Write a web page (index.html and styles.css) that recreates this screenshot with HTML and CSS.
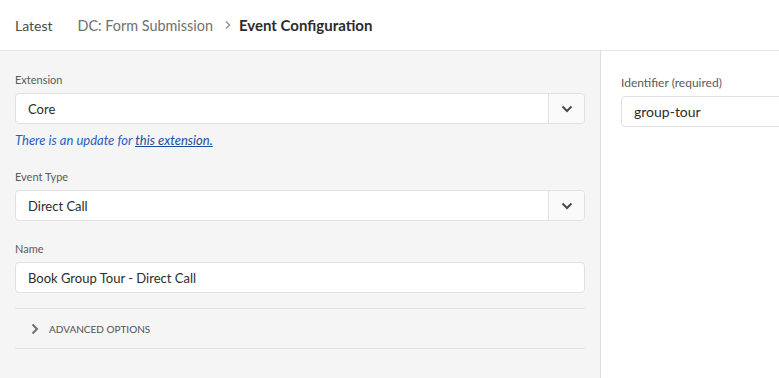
FILE: index.html
```html
<!DOCTYPE html>
<html lang="en">
<head>
    <meta charset="UTF-8">
    <meta name="viewport" content="width=device-width, initial-scale=1.0">
    <title>Event Configuration</title>
    <link rel="stylesheet" href="styles.css">
</head>
<body>
    <div class="header">
        <span class="latest">Latest</span>
        <span class="crumb">DC: Form Submission</span>
        <svg class="crumb-sep" width="8" height="10" viewBox="0 0 8 10"><path d="M2 1.5 L5.5 5 L2 8.5" fill="none" stroke="#8e8e8e" stroke-width="1.3"/></svg>
        <span class="current">Event Configuration</span>
    </div>
    <div class="main">
        <div class="left">
            <div class="field ext">
                <label>Extension</label>
                <div class="select">
                    <div class="select-value">Core</div>
                    <div class="select-btn">
                        <svg width="12" height="8" viewBox="0 0 12 8"><path d="M1.5 1.5 L6 6 L10.5 1.5" fill="none" stroke="#4b4b4b" stroke-width="2"/></svg>
                    </div>
                </div>
                <p class="update">There is an update for <a href="#">this extension.</a></p>
            </div>
            <div class="field">
                <label>Event Type</label>
                <div class="select">
                    <div class="select-value">Direct Call</div>
                    <div class="select-btn">
                        <svg width="12" height="8" viewBox="0 0 12 8"><path d="M1.5 1.5 L6 6 L10.5 1.5" fill="none" stroke="#4b4b4b" stroke-width="2"/></svg>
                    </div>
                </div>
            </div>
            <div class="field">
                <label>Name</label>
                <div class="input">Book Group Tour - Direct Call</div>
            </div>
            <div class="advanced">
                <svg width="8" height="12" viewBox="0 0 8 12"><path d="M1.5 1.5 L6 6 L1.5 10.5" fill="none" stroke="#6e6e6e" stroke-width="2"/></svg>
                <span>ADVANCED OPTIONS</span>
            </div>
        </div>
        <div class="right">
            <label class="id-label">Identifier (required)</label>
            <div class="input id-input">group-tour</div>
        </div>
    </div>
</body>
</html>
```

FILE: styles.css
```css
html, body{
    margin: 0;
    padding: 0;
    height: 100%;
    overflow: hidden;
}
body{
    font-family: Lato, "Open Sans", sans-serif;
    color: #2c2c2c;
    background-color: white;
}
.header{
    height: 50px;
    border-bottom: 1px solid #e6e6e6;
    display: flex;
    align-items: center;
    padding-left: 15px;
    font-size: 14px;
}
.latest{
    color: #4b4b4b;
    margin-right: 25px;
}
.crumb{
    color: #707070;
    font-size: 14.4px;
}
.crumb-sep{
    margin: 0 7px 0 11px;
}
.current{
    font-weight: bold;
    font-size: 15px;
    color: #2c2c2c;
}
.main{
    display: flex;
    height: calc(100% - 51px);
}
.left{
    width: 570px;
    background-color: #f5f5f5;
    padding: 22px 15px 0 15px;
    border-right: 1px solid #dcdcdc;
}
.field{
    margin-bottom: 21px;
}
.field.ext{
    margin-bottom: 22px;
}
label{
    display: block;
    font-size: 11px;
    color: #5a5a5a;
    margin-bottom: 7px;
}
.select{
    display: flex;
    height: 31px;
    border: 1px solid #e1e1e1;
    border-radius: 4px;
    background-color: white;
    box-sizing: border-box;
}
.select-value{
    flex: 1;
    display: flex;
    align-items: center;
    padding-left: 12px;
    font-size: 13px;
    color: #2c2c2c;
}
.select-btn{
    width: 35px;
    border-left: 1px solid #e1e1e1;
    background-color: #fafafa;
    border-radius: 0 4px 4px 0;
    display: flex;
    align-items: center;
    justify-content: center;
}
.input{
    height: 31px;
    border: 1px solid #e1e1e1;
    border-radius: 4px;
    background-color: white;
    box-sizing: border-box;
    display: flex;
    align-items: center;
    padding-left: 12px;
    font-size: 13px;
    color: #2c2c2c;
}
.update{
    margin: 8px 0 0 0;
    font-size: 13px;
    font-style: italic;
    color: #1f5fbf;
}
.update a{
    color: #1a4f9c;
}
.advanced{
    margin-top: -6px;
    border-top: 1px solid #e1e1e1;
    border-bottom: 1px solid #e1e1e1;
    height: 39px;
    display: flex;
    align-items: center;
    padding-left: 16px;
    font-size: 10px;
    color: #505050;
}
.advanced svg{
    margin-right: 10px;
}
.right{
    flex: 1;
    padding: 24px 0 0 20px;
}
.id-label{
    font-size: 12px;
    margin-bottom: 6px;
}
.id-input{
    margin-right: -20px;
    border-radius: 4px 0 0 4px;
    font-size: 14px;
}
```
